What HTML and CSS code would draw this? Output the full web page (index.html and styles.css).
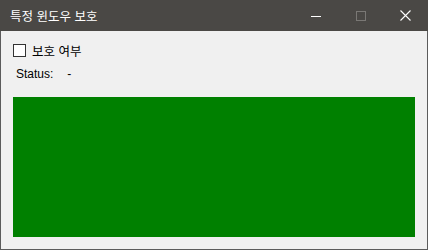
FILE: index.html
```html
<!DOCTYPE html>
<html lang="ko">
<head>
  <meta charset="UTF-8">
  <title>특정 윈도우 보호</title>
  <link rel="stylesheet" href="styles.css">
</head>
<body>
  <div class="window">
    <!-- Title bar -->
    <div class="titlebar">
      <span class="title">특정 윈도우 보호</span>
      <div class="controls">
        <span class="ctl">
          <svg width="10" height="10" viewBox="0 0 10 10"><path d="M0 5.5h10" stroke="#fff" stroke-width="1"/></svg>
        </span>
        <span class="ctl">
          <svg width="10" height="10" viewBox="0 0 10 10"><rect x="0.5" y="0.5" width="9" height="9" fill="none" stroke="#7a7875" stroke-width="1"/></svg>
        </span>
        <span class="ctl">
          <svg width="11" height="11" viewBox="0 0 11 11"><path d="M0.5 0.5l10 10M10.5 0.5l-10 10" stroke="#fff" stroke-width="1.1"/></svg>
        </span>
      </div>
    </div>

    <!-- Content -->
    <div class="content">
      <label class="check-row">
        <span class="box"></span>
        <span class="check-label">보호 여부</span>
      </label>
      <div class="status">Status:<span class="status-val">-</span></div>
      <div class="preview"></div>
    </div>
  </div>
</body>
</html>
```

FILE: styles.css
```css
html, body {
  margin: 0;
  padding: 0;
}
body {
  width: 428px;
  height: 250px;
  background: #f0f0f0;
}
.window {
  box-sizing: border-box;
  width: 428px;
  height: 250px;
  border: 1px solid #5b5b5b;
  border-top: none;
  display: flex;
  flex-direction: column;
  background: #f0f0f0;
}
.titlebar {
  height: 31px;
  margin: 0 -1px;
  background: #4a4845;
  display: flex;
  align-items: center;
  justify-content: space-between;
  flex-shrink: 0;
}
.title {
  color: #fff;
  font-family: "Noto Sans CJK KR", sans-serif;
  font-size: 12.5px;
  padding-left: 10px;
  margin-top: -1px;
}
.controls {
  display: flex;
  align-items: center;
  height: 100%;
}
.ctl {
  width: 45px;
  height: 100%;
  display: flex;
  align-items: center;
  justify-content: center;
}
.ctl svg {
  display: block;
}
.content {
  flex: 1;
  padding: 0 11px 12px 12px;
  display: flex;
  flex-direction: column;
}
.check-row {
  display: flex;
  align-items: center;
  margin-top: 12px;
  height: 14px;
}
.box {
  box-sizing: border-box;
  width: 13px;
  height: 13px;
  border: 1px solid #333;
  background: #fff;
}
.check-label {
  font-family: "Noto Sans CJK KR", sans-serif;
  font-size: 12.5px;
  color: #000;
  margin-left: 6px;
}
.status {
  font-family: "Liberation Sans", Arial, sans-serif;
  font-size: 12px;
  color: #000;
  margin-top: 10px;
  padding-left: 3px;
  height: 14px;
}
.status-val {
  margin-left: 14px;
}
.preview {
  margin-top: 16px;
  width: 402px;
  height: 140px;
  background: #008000;
}
```
